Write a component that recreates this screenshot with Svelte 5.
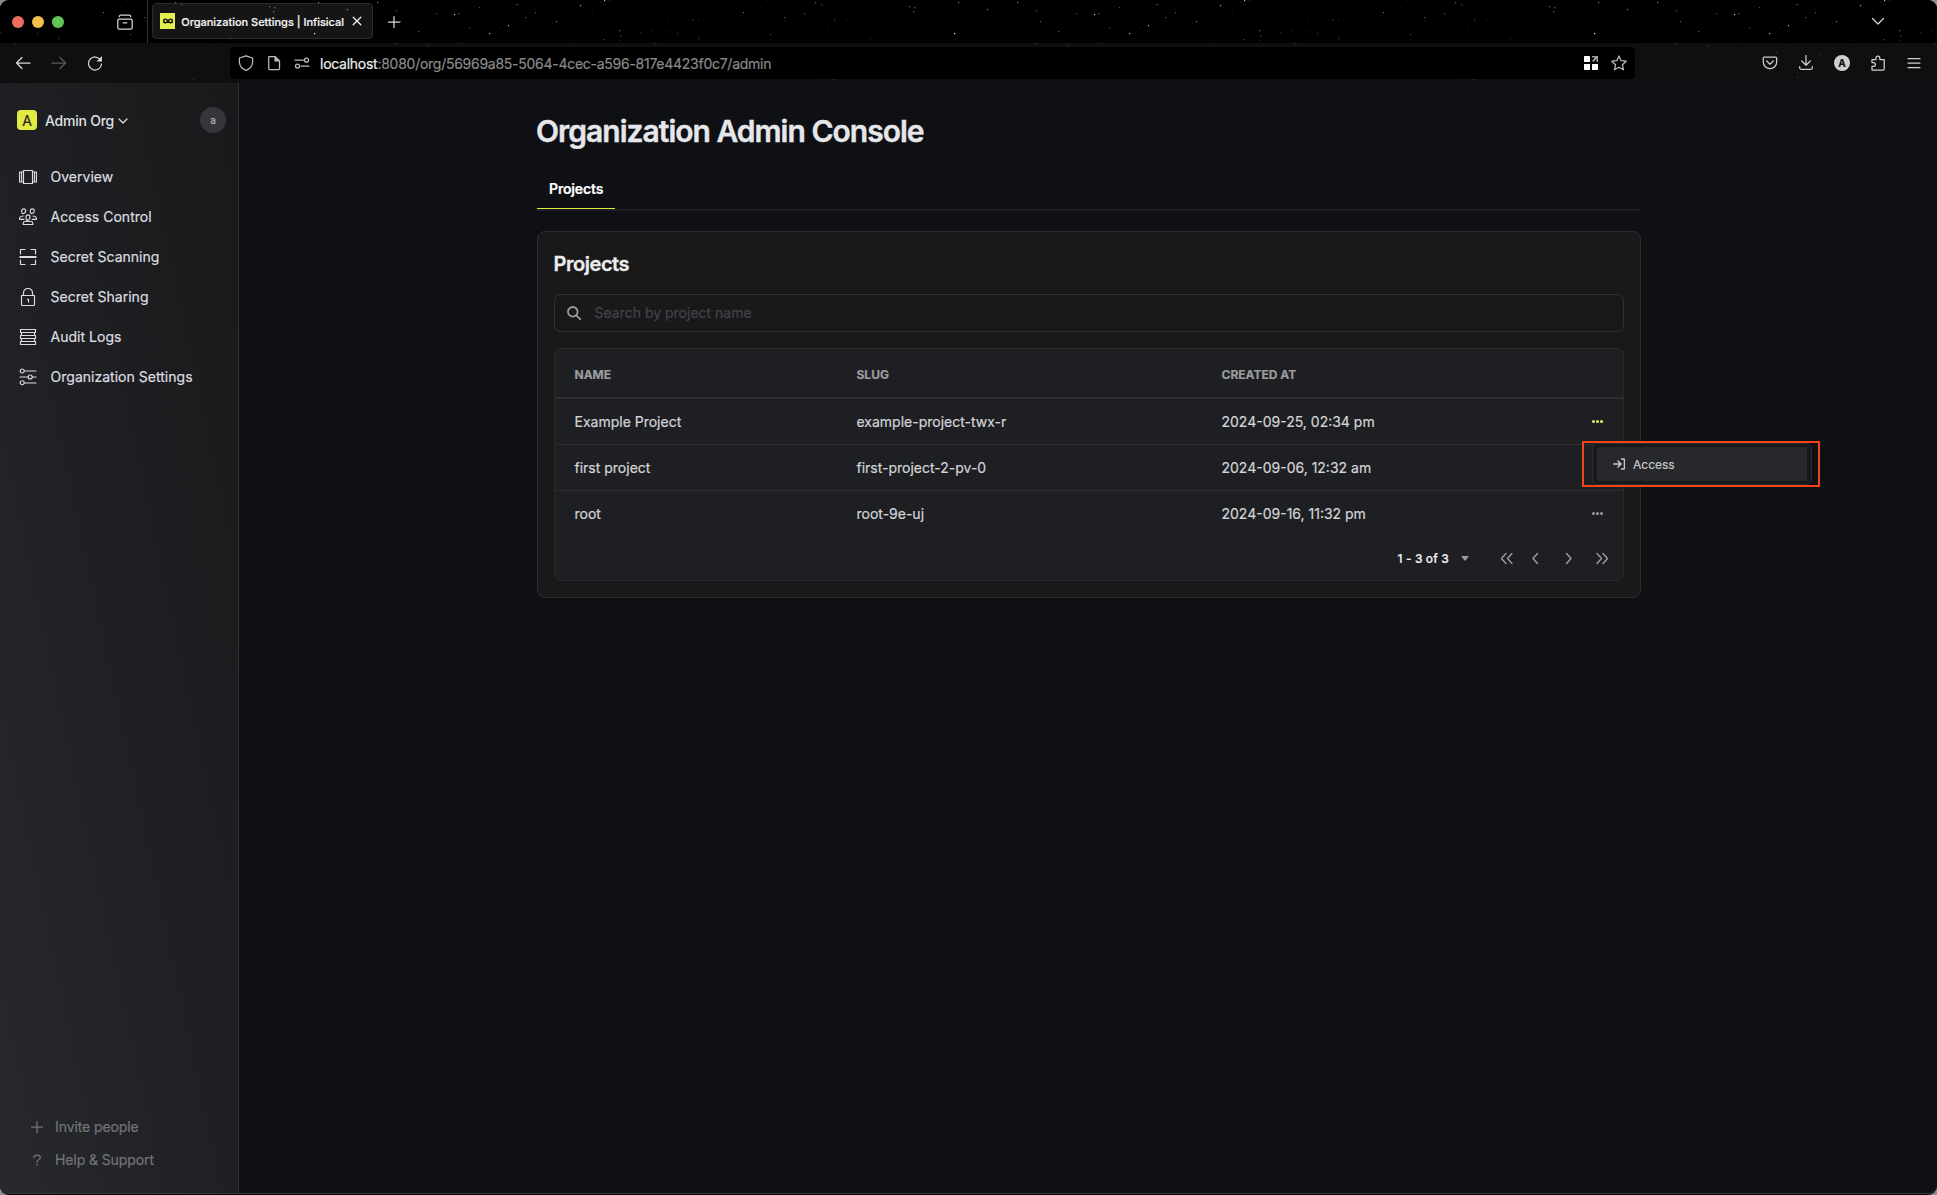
<script>
  const nav = [
    { id: 'overview', label: 'Overview', d: 'M4.500 2.500h9v13h-9zM4.500 4H.5v10h4M13.500 4h4v10h-4M2.500 4v10M15.500 4v10' },
    { id: 'access', label: 'Access Control', d: 'M2.700 2.800q0-2 2-2t2 2-2 2.700-2-2.700zM11.300 2.800q0-2 2-2t2 2-2 2.700-2-2.700zM7 9q0-2.200 2-2.200t2 2.200-2 3-2-3zM5 11.300H.6V9.800q.5-1.600 3.400-1.800M13 11.300h4.400V9.800q-.5-1.600-3.400-1.800M4.200 16.500v-1.300q.4-2 2.800-1.900h4q2.400-.1 2.800 1.900v1.300z' },
    { id: 'scan', label: 'Secret Scanning', d: 'M1.500 6V1.500H6M12 1.500h4.500V6M16.500 12v4.500H12M6 16.500H1.500V12M1 8.500h16M1 9.500h16' },
    { id: 'lock', label: 'Secret Sharing', d: 'M2.500 7.500h13v9a1 1 0 0 1-1 1h-11a1 1 0 0 1-1-1zM4.500 7.500V4.600Q5 .5 9 .5t4.500 4.100v2.900M8.500 11.300h1v2.800' },
    { id: 'logs', label: 'Audit Logs', d: 'M1.500 1.500h15v3h-15zM1.500 7.500h15v3h-15zM1.500 13.500h15v3h-15zM2.500 4.500v3M15.500 4.500v3M2.500 10.500v3M15.500 10.500v3' },
    { id: 'settings', label: 'Organization Settings', d: 'M5.200 3H17M1 9h8M13.500 9H17M5.200 15H17M1.200 3a2 2 0 1 0 4 0 2 2 0 1 0-4 0M9.200 9a2 2 0 1 0 4 0 2 2 0 1 0-4 0M1.200 14.700a2 2 0 1 0 4 0 2 2 0 1 0-4 0' }
  ];
  const rows = [
    { name: 'Example Project', slug: 'example-project-twx-r', at: '2024-09-25, 02:34 pm', open: true },
    { name: 'first project', slug: 'first-project-2-pv-0', at: '2024-09-06, 12:32 am', hidden: true },
    { name: 'root', slug: 'root-9e-uj', at: '2024-09-16, 11:32 pm' }
  ];

  // Night-sky theme: one 640px tile of stars, [x, y, opacity, warm]
  const bright = [
    [103, 12, 0.6, 1], [269, 6, 0.4], [273, 11, 0.45], [274, 7, 0.4], [347, 9, 0.45], [377, 2, 0.5], [314, 33, 0.9], [318, 2, 0.5],
    [181, 4, 0.3], [194, 19, 0.2], [604, 0, 0.7], [580, 5, 0.6], [516, 4, 0.35], [454, 14, 0.75], [458, 13, 0.4],
    [479, 7, 0.3], [535, 12, 0.35], [525, 17, 0.35], [556, 21, 0.5], [489, 33, 0.7], [508, 25, 0.9, 1], [400, 21, 0.35],
    [619, 30, 0.4], [620, 35, 0.3], [603, 39, 0.3], [469, 27, 0.25], [418, 31, 0.3], [436, 13, 0.25], [144, 17, 0.3],
    [164, 13, 0.3], [175, 2, 0.35], [130, 34, 0.25], [52, 19, 0.25], [58, 38, 0.25], [37, 33, 0.2], [396, 10, 0.3],
    [428, 45, 0.2], [496, 52, 0.2], [517, 77, 0.25, 1], [539, 54, 0.2], [193, 79, 0.15]
  ];
  let seed = 41;
  const rnd = () => (seed = (seed * 16807) % 2147483647) / 2147483647;
  const faint = Array.from({ length: 80 }, () => {
    const x = Math.floor(rnd() * 640);
    const y = Math.floor(rnd() * 83);
    return [x, y, (y > 43 ? 0.03 : 0.05) + rnd() * (y > 43 ? 0.02 : 0.1)];
  });
  const stars = [...bright, ...faint];
</script>

{#snippet icon(d, cls = '', box = 16)}
  <svg class="icon {cls}" viewBox="0 0 {box} {box}" width={box} height={box} aria-hidden="true"><path {d} /></svg>
{/snippet}

<div class="window">
  <header class="chrome">
    <div class="tabstrip">
      <div class="lights"><i class="red"></i><i class="amber"></i><i class="green"></i></div>
      {@render icon('M.8 6.500a1.500 1.500 0 0 1 1.500-1.500h11.400a1.500 1.500 0 0 1 1.500 1.500v7.200a1.500 1.500 0 0 1-1.500 1.500H2.300a1.500 1.500 0 0 1-1.500-1.500zM2.200 2.800Q2.400 1 3.900 1h8.200q1.500 0 1.700 1.800M6.200 8.800h3.600', 'view')}
      <div class="tab">
        <span class="favicon"><svg width="12" height="8" viewBox="0 0 12 8"><path d="M6 4C5.200 2.800 4.500 2.200 3.400 2.200a1.800 1.800 0 0 0 0 3.600C4.500 5.800 5.200 5.200 6 4s1.500-1.800 2.600-1.800a1.800 1.800 0 0 1 0 3.600C7.500 5.800 6.800 5.200 6 4z" /></svg></span>
        <span class="tab-title">Organization Settings | Infisical</span>
        {@render icon('M4.200 4.200l7.600 7.600M11.800 4.200l-7.600 7.600', 'close')}
      </div>
      {@render icon('M8 2.500v11M2.500 8h11', 'plus')}
      {@render icon('M2.500 5.500L8 11l5.500-5.500', 'tabs-down')}
    </div>

    <div class="toolbar">
      <div class="navbtns">
        {@render icon('M15 8H1.500M7 2.500L1.500 8 7 13.500')}
        {@render icon('M1 8h13.500M9 2.500L14.500 8 9 13.500', 'dim')}
        <svg class="icon" width="16" height="16" viewBox="0 0 16 16"><path d="M13.500 5A6.500 6.500 0 1 0 14.500 9" /><path class="solid" d="M15 1v5.500H9.500z" /></svg>
      </div>
      <div class="urlbar">
        {@render icon('M8 .8L14.600 3v4.500Q14 13 8 15.400 2 13 1.400 7.500V3z', 'soft')}
        <svg class="icon soft" width="16" height="16" viewBox="0 0 16 16"><path d="M2.700 2.500a1 1 0 0 1 1-1H9L13.500 6v7.500a1 1 0 0 1-1 1H3.700a1 1 0 0 1-1-1z" /><path class="solid" d="M8.500 1.500v5h5z" /></svg>
        {@render icon('M1 5.200h8.500M7 11h8M10.500 5.200a2 2 0 1 0 4 0 2 2 0 1 0-4 0M1.500 11a2 2 0 1 0 4 0 2 2 0 1 0-4 0', 'soft')}
        <span class="url"><b>localhost</b>:8080/org/56969a85-5064-4cec-a596-817e4423f0c7/admin</span>
        <svg class="grid-icon" width="14" height="14" viewBox="0 0 14 14"><path fill="#fff" d="M.7 0H5.300Q6 0 6 .7V6H0V.7Q0 0 .7 0zM0 8h6v6H.7Q0 14 0 13.300zM8 8h6v5.300q0 .7-.7.700H8z" /><path fill="#a0a0a0" d="M8 0h6v6h-1.500V3L9.300 6 8 4.700 11 1.500H8z" /></svg>
        {@render icon('M8 1l2.100 4.700 5.100.5-3.800 3.500 1.100 5.100L8 12.200l-4.500 2.600 1.100-5.100L.8 6.200l5.100-.5z', 'soft')}
      </div>
      <div class="tools">
        {@render icon('M2.500 2h11q1.200 0 1.200 1.200V7a6.700 6.700 0 0 1-13.400 0V3.200Q1.300 2 2.500 2zM4.700 6L8 9.200 11.300 6')}
        {@render icon('M8 .5v9.700M3.700 6L8 10.300 12.300 6M1.700 11.500v1.300q0 1.500 1.500 1.500h9.600q1.500 0 1.500-1.500v-1.300')}
        <span class="account">A</span>
        {@render icon('M2 15V11.300h1.500a1.900 1.900 0 0 0 0-3.800H2V4.500h4V3a1.900 1.900 0 0 1 3.800 0v1.500h4.400V14a1 1 0 0 1-1 1z')}
        {@render icon('M2 3.500h12M2 8h12M2 12.500h12')}
      </div>
    </div>

    <svg class="sky" width="1937" height="83" aria-hidden="true">
      <defs>
        <pattern id="stars" width="640" height="83" patternUnits="userSpaceOnUse">
          {#each stars as [x, y, o, warm]}
            <rect {x} {y} width="1.200" height="1.200" fill={warm ? '#ffa575' : '#fff'} opacity={o} />
          {/each}
        </pattern>
      </defs>
      <path fill="url(#stars)" d="M0 0H1937V83H0zM230 47V79H1635V47z" fill-rule="evenodd" />
    </svg>
  </header>

  <div class="page">
    <aside>
      <div class="org">
        <span class="badge">A</span>
        <span class="org-name">Admin Org</span>
        {@render icon('M1 3L5 7l4-4', 'org-down', 10)}
        <span class="avatar">a</span>
      </div>
      <nav>
        {#each nav as item}
          <a href="#{item.id}">{@render icon(item.d, 'nav-icon', 18)}{item.label}</a>
        {/each}
      </nav>
      <footer>
        <div>{@render icon('M6 .5v11M.5 6h11', '', 12)}Invite people</div>
        <div>{@render icon('M2.700 3.700Q2.900 1 6 1q3.200 0 3.300 2.500 0 1.400-1.600 2.300Q6 6.700 6 8.200M6 10.200v1', '', 12)}Help &amp; Support</div>
      </footer>
    </aside>

    <main>
      <h1>Organization Admin Console</h1>
      <div class="tabs"><button>Projects</button></div>
      <section class="card">
        <h2>Projects</h2>
        <div class="search">
          {@render icon('M1 5.800a4.800 4.800 0 1 0 9.600 0 4.800 4.800 0 1 0-9.600 0M9.300 9.300L13.300 13.300', 'glass', 14)}
          <span>Search by project name</span>
        </div>
        <div class="table">
          <div class="row head"><span>NAME</span><span>SLUG</span><span>CREATED AT</span></div>
          {#each rows as r}
            <div class="row">
              <span>{r.name}</span><span>{r.slug}</span><span>{r.at}</span>
              {#if !r.hidden}<span class="more" class:open={r.open}><i></i><i></i><i></i></span>{/if}
              {#if r.open}
                <div class="annotation">
                  <div class="menu">
                    <div class="menu-item">
                      {@render icon('M.5 6h7M5 3l3 3-3 3M8.500 1h1.800q1.200 0 1.200 1.200v7.600q0 1.200-1.200 1.200H8.500', 'enter', 12)}Access
                    </div>
                  </div>
                </div>
              {/if}
            </div>
          {/each}
          <div class="pager">
            <span>1 - 3 of 3</span>
            <i class="caret"></i>
            {@render icon('M6 1.500L1.500 6.500 6 11.500M12 1.500L7.500 6.500l4.500 5', 'first', 13)}
            {@render icon('M8.500 1.500L4 6.500l4.500 5', 'prev', 13)}
            {@render icon('M4.500 1.500L9 6.500l-4.500 5', 'next', 13)}
            {@render icon('M1 1.500l4.500 5L1 11.500M7 1.500l4.500 5L7 11.500', 'last', 13)}
          </div>
        </div>
      </section>
    </main>
  </div>
</div>

<style>
  :global(body) { background: #8c8c8c; }
  .window, .window * { box-sizing: border-box; }
  .window {
    height: 1195px;
    display: flex;
    flex-direction: column;
    overflow: hidden;
    border-radius: 9px;
    background: #0e1014;
    border-bottom: 1px solid #000;
    box-shadow: inset 0 -1px #3b3c3f;
    font-family: Inter, 'Liberation Sans', sans-serif;
    font-size: 14px;
    color: #dcdde0;
    -webkit-text-stroke: 0.2px;
  }
  .icon { flex: none; display: block; fill: none; stroke: currentColor; stroke-width: 1.250; stroke-linejoin: round; stroke-linecap: round; }
  .solid { fill: currentColor; stroke: none; }

  .chrome { position: relative; height: 83px; flex: none; background: #000; color: #d8d8d8; }
  .sky { position: absolute; inset: 0; pointer-events: none; }
  .tabstrip { height: 43px; display: flex; align-items: center; padding: 0 51px 0 12px; }
  .lights { display: flex; gap: 8px; width: 105px; }
  .lights i { width: 12px; height: 12px; border-radius: 50%; }
  .red { background: #ed6a5e; }
  .amber { background: #f5bf4f; }
  .green { background: #61c554; }
  .view { margin-right: 14px; }
  .tab {
    width: 221px; height: 36px; margin: -1px 0 0 5px; padding: 0 7px;
    display: flex; align-items: center;
    background: #151515; border: 1px solid #2b2b2b; border-radius: 4px;
    position: relative; color: #f4f4f4;
  }
  .tab::before { content: ''; position: absolute; left: -6px; top: -4px; width: 1px; height: 43px; background: #333; }
  .favicon { width: 16px; height: 16px; background: #e5ef50; display: flex; align-items: center; justify-content: center; margin-right: 6px; }
  .favicon path { fill: none; stroke: #16170a; stroke-width: 1.500; }
  .tab-title { font-size: 11px; font-weight: 500; letter-spacing: -0.020px; width: 164px; white-space: nowrap; padding-top: 1px; }
  .close { margin-left: 5px; }
  .plus { margin-left: 13px; }
  .tabs-down { margin-left: auto; margin-top: -2px; }
  .toolbar { height: 40px; background: #0f0f0f; display: flex; align-items: center; padding: 0 15px; }
  .navbtns { display: flex; gap: 20px; width: 215px; }
  .dim { color: #5c5c5c; }
  .urlbar { width: 1405px; height: 32px; border-radius: 4px; background: #000; display: flex; align-items: center; padding: 0 8px; gap: 12px; }
  .soft { color: #bdbdbd; }
  .url { font-size: 14px; letter-spacing: -0.265px; color: #8a8a8a; flex: 1; white-space: nowrap; margin-left: -2px; padding-top: 1px; }
  .url b { font-weight: 400; color: #ececec; }
  .grid-icon { margin-right: 1px; }
  .tools { display: flex; flex: 1; align-items: center; justify-content: flex-end; gap: 20px; color: #cfcfcf; }
  .account { width: 16px; height: 16px; border-radius: 50%; background: #cfcfcf; color: #111; font-size: 10px; font-weight: 700; line-height: 16px; text-align: center; }

  .page { flex: 1; display: flex; min-height: 0; padding-bottom: 1px; }
  aside {
    width: 239px; flex: none; display: flex; flex-direction: column; padding: 24px 12px 17px 17px;
    background: linear-gradient(to top right, #28292d, #1f2023 50%, #19191b);
    border-right: 1px solid #303135;
  }
  .org { display: flex; align-items: center; height: 26px; margin-bottom: 23px; }
  .badge { width: 20px; height: 20px; border-radius: 4px; background: #e2eb43; color: #222; font-size: 14px; line-height: 21px; text-align: center; }
  .org-name { margin-left: 8px; letter-spacing: -0.240px; font-weight: 500; padding-top: 1px; color: #dfe0e2; -webkit-text-stroke: 0; }
  .org-down { margin-left: 4px; margin-top: 2px; }
  .avatar { width: 26px; height: 26px; border-radius: 50%; background: #35363b; margin-left: auto; font-size: 10px; line-height: 26px; text-align: center; color: #b5b6b9; }
  nav a { display: flex; align-items: center; gap: 13px; height: 40px; padding-left: 2px; color: #dcdde0; text-decoration: none; letter-spacing: 0.020px; }
  .nav-icon { stroke-width: 1.150; margin: 1px 0.500px 0 0; }
  footer { margin-top: auto; color: #737478; }
  footer div { display: flex; align-items: center; gap: 12px; height: 33px; padding-left: 14px; letter-spacing: -0.100px; }

  main { width: 1104px; margin-left: 298px; padding-top: 30px; }
  h1 { margin: 0 0 0 -1px; font-size: 30px; line-height: 36px; font-weight: 600; letter-spacing: -0.990px; color: #e6e7ea; -webkit-text-stroke: 0.4px; }
  .tabs { margin-top: 19px; height: 43px; border-bottom: 2px solid #1c1d20; display: flex; align-items: flex-start; }
  .tabs button { height: 41px; padding: 1px 12px 0; border: 0; border-bottom: 1px solid #e0ed34; background: none; font: 600 14px Inter, sans-serif; letter-spacing: -0.150px; width: 78px; color: #fff; white-space: nowrap; }
  .card { margin-top: 20px; height: 367px; border: 1px solid #2c2d31; border-radius: 8px; background: #19191a; padding: 16px; }
  h2 { margin: 0 0 0 -0.500px; font-size: 20px; font-weight: 600; letter-spacing: -0.450px; line-height: 32px; color: #ececee; -webkit-text-stroke: 0.3px; }
  .search { margin-top: 14px; height: 38px; border: 1px solid #303135; border-radius: 6px; display: flex; align-items: center; padding: 0 0 1px 12px; gap: 13.500px; color: #43444c; }
  .glass { color: #9a9ba8; stroke-width: 1.800; }
  .table { margin-top: 16px; height: 233px; border: 1px solid #292a2e; border-radius: 7px; background: #1e1f22; }
  .row { position: relative; display: grid; grid-template-columns: 282px 365px 369.500px 1fr; align-items: center; height: 46px; padding-left: 19.500px; border-bottom: 1px solid #2d2e33; color: #d3d4d7; }
  .head { height: 50px; border-bottom-width: 2px; font-size: 12px; font-weight: 700; color: #9b9c9e; padding-top: 3px; }
  .row:nth-last-child(2) { border-bottom-color: transparent; }
  .more { display: flex; gap: 0; padding-left: 1px; margin-top: -1px; }
  .more i { width: 3px; height: 3px; margin-right: 1px; border-radius: 1.500px; background: #9b9c9f; }
  .open i { background: #e5ee60; }
  .annotation { position: absolute; z-index: 2; left: 1027px; top: 42px; width: 238px; height: 46px; border: 2px solid #ef451b; padding: 0 6px 0 8px; }
  .menu { height: 42px; border: 1px solid #2c2d31; border-radius: 6px; background: #19191a; padding: 3px 4px; }
  .menu-item { height: 34px; border-radius: 2px; background: #27282b; display: flex; align-items: center; gap: 8px; padding-left: 16px; font-size: 12px; color: #c9cacc; }
  .enter { stroke-width: 1.500; }
  .pager { display: flex; align-items: center; height: 42px; padding: 1px 0 0 842.500px; font-size: 12px; font-weight: 500; color: #f2f2f3; }
  .pager span { width: 52px; white-space: nowrap; letter-spacing: 0.120px; }
  .caret { margin: 0 0 0 11px; border: 4px solid transparent; border-top: 5px solid #9b9c9f; border-bottom: 0; }
  .pager .icon { color: #9b9c9f; stroke-width: 1.400; margin-top: -1px; }
  .first { margin-left: 31.500px; }
  .prev { margin-left: 15.500px; }
  .next { margin-left: 20px; }
  .last { margin-left: 21.500px; }
</style>
